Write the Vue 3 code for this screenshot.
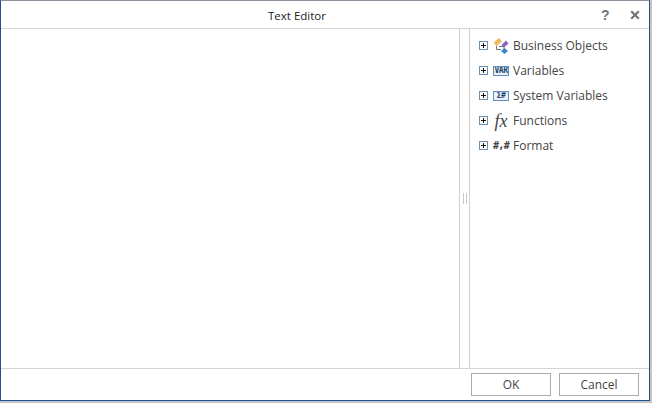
<script setup>
const nodes = [
  { label: 'Business Objects', icon: 'bo' },
  { label: 'Variables', icon: 'var' },
  { label: 'System Variables', icon: 'sys' },
  { label: 'Functions', icon: 'fx' },
  { label: 'Format', icon: 'fmt' },
]
</script>

<template>
  <div class="shadow">
    <div class="dialog">
      <header class="titlebar">
        <div class="title">Text Editor</div>
        <div class="help">?</div>
        <svg class="close" width="10" height="10" viewBox="0 0 10 10">
          <path d="M1.2 1.2 L8.8 8.8 M8.8 1.2 L1.2 8.8" stroke="#737373" stroke-width="2.2" fill="none" />
        </svg>
      </header>
      <main class="body">
        <div class="editor"></div>
        <div class="splitter"><span class="grip"></span></div>
        <ul class="tree">
          <li v-for="n in nodes" :key="n.label" class="node">
            <svg class="expander" width="9" height="9" viewBox="0 0 9 9">
              <rect x="0.5" y="0.5" width="8" height="8" fill="#fff" stroke="#6d8fb0" />
              <path d="M2 4.5H7M4.5 2V7" stroke="#111" stroke-width="1" />
            </svg>
            <span class="icon">
              <svg v-if="n.icon === 'bo'" width="16" height="16" viewBox="0 0 16 16">
                <path d="M3.5 7.5V11.5H8M6 8.5H11V12" fill="none" stroke="#777" />
                <path d="M0.5 4.5L6 0L9 3.5L3.5 8Z" fill="#f0b95c" />
                <path d="M8.5 7L13 2.5L15.5 5.5L11 9.5Z" fill="#8a63c0" />
                <path d="M8 13L11.5 10L15 13L11.5 16Z" fill="#3c86c8" />
              </svg>
              <span v-else-if="n.icon === 'var'" class="badge var">VAR</span>
              <span v-else-if="n.icon === 'sys'" class="badge sys">Σ#</span>
              <span v-else-if="n.icon === 'fx'" class="fx">fx</span>
              <span v-else class="fmt">#,#</span>
            </span>
            <span class="label">{{ n.label }}</span>
          </li>
        </ul>
      </main>
      <footer class="footer">
        <button class="btn">OK</button>
        <button class="btn">Cancel</button>
      </footer>
    </div>
  </div>
</template>

<style>
html, body { margin: 0; background: #c4c4c4; }
</style>

<style scoped>
.shadow { width: 652px; height: 403px; overflow: hidden; background: #c4c4c4; }
.dialog {
  box-sizing: border-box; width: 650px; height: 401px;
  display: flex; flex-direction: column; background: #fff;
  border: 1px solid #1c5196; border-top-color: #8a929c;
  font-family: "Open Sans", "Noto Sans", sans-serif; color: #444;
}
.titlebar {
  box-sizing: border-box; height: 28px; flex: none; position: relative;
  border-bottom: 1px solid #d4d4d4;
}
.title { text-align: center; font-size: 11.5px; line-height: 29px; color: #222; padding-right: 56px; }
.help {
  position: absolute; left: 600px; top: 6px; font: bold 14px/17px "Liberation Sans", sans-serif; color: #737373;
}
.close { position: absolute; left: 629px; top: 9px; }
.body { flex: 1; display: flex; min-height: 0; }
.editor { width: 458px; flex: none; }
.splitter {
  box-sizing: border-box; width: 11px; flex: none;
  border-left: 1px solid #d0d0d0; border-right: 1px solid #d0d0d0;
  display: flex; align-items: center; justify-content: center;
}
.grip {
  width: 4px; height: 11px; box-sizing: border-box;
  border-left: 1px solid #c8c8c8; border-right: 1px solid #c8c8c8;
}
.tree { list-style: none; margin: 0; padding: 4px 0 0 9px; flex: 1; }
.node { height: 25px; display: flex; align-items: center; }
.expander { flex: none; }
.icon { width: 16px; margin: 0 0 0 5px; display: flex; justify-content: center; align-items: center; height: 16px; flex: none; }
.label { margin-left: 4px; font-size: 12px; color: #444; }
.badge {
  box-sizing: border-box; width: 16px; height: 10px; border: 1px solid #5b8fc4; background: #eaf0f7;
  font: bold 8px/8px "DejaVu Sans Mono", monospace; color: #24466e; text-align: center; letter-spacing: -.5px; overflow: hidden;
}
.fx { font: italic 18px/16px "Liberation Serif", serif; color: #444; }
.fmt { font: bold 10px/12px "DejaVu Sans Mono", monospace; color: #444; letter-spacing: -.6px; }
.footer {
  box-sizing: border-box; height: 32px; flex: none; border-top: 1px solid #d4d4d4;
  display: flex; justify-content: flex-end; gap: 8px; padding: 4px 10px 0 0;
}
.btn {
  box-sizing: border-box; width: 80px; height: 23px; padding: 0; background: #fff;
  border: 1px solid #ababab; font: 12px "Open Sans", sans-serif; color: #444;
}
</style>
